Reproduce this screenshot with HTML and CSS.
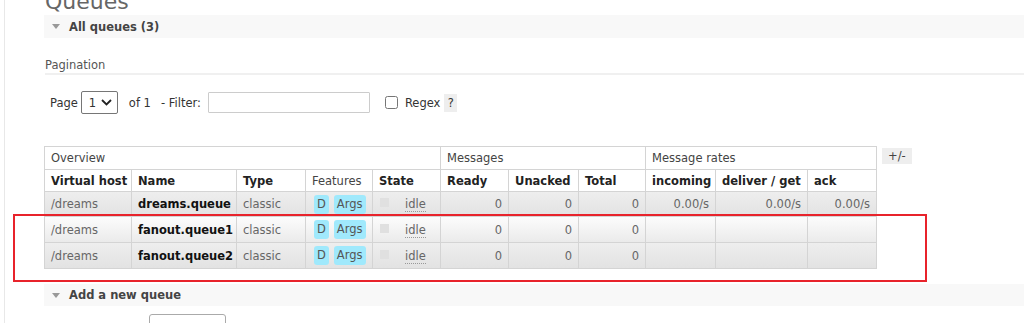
FILE: index.html
```html
<!DOCTYPE html>
<html lang="en">

<head>
    <meta charset="UTF-8">
    <title>Queues</title>
    <link rel="stylesheet" href="styles.css">
</head>

<body>
    <div class="wrap">
        <div class="main">
            <h1>Queues</h1>
            <div class="section-head"><span class="arrow"></span>All queues (3)</div>

            <h3 class="sub">Pagination</h3>
            <div class="pager">
                <span>Page</span>
                <div class="select">
                    <span>1</span>
                    <svg width="11" height="7" viewBox="0 0 11 7"><path d="M1 1 L5.5 5.5 L10 1" fill="none" stroke="#222" stroke-width="1.8"/></svg>
                </div>
                <span class="of">of 1</span>
                <span class="filter-label">- Filter:</span>
                <input type="text" class="filter">
                <input type="checkbox" class="regex-box">
                <span class="regex">Regex</span>
                <span class="help">?</span>
            </div>

            <div class="table-row">
                <table class="list">
                    <colgroup>
                        <col style="width: 87px">
                        <col style="width: 105px">
                        <col style="width: 69px">
                        <col style="width: 67px">
                        <col style="width: 68px">
                        <col style="width: 68px">
                        <col style="width: 70px">
                        <col style="width: 67px">
                        <col style="width: 70px">
                        <col style="width: 92px">
                        <col style="width: 69px">
                    </colgroup>
                    <thead>
                        <tr class="group">
                            <th colspan="5">Overview</th>
                            <th colspan="3">Messages</th>
                            <th colspan="3">Message rates</th>
                        </tr>
                        <tr class="cols">
                            <th>Virtual host</th>
                            <th>Name</th>
                            <th>Type</th>
                            <th class="plain">Features</th>
                            <th>State</th>
                            <th>Ready</th>
                            <th>Unacked</th>
                            <th>Total</th>
                            <th>incoming</th>
                            <th>deliver / get</th>
                            <th>ack</th>
                        </tr>
                    </thead>
                    <tbody>
                        <tr class="alt1">
                            <td>/dreams</td>
                            <td class="name">dreams.queue</td>
                            <td>classic</td>
                            <td><span class="badge first">D</span><span class="badge">Args</span></td>
                            <td><span class="state-box"></span><span class="idle">idle</span></td>
                            <td class="num">0</td>
                            <td class="num">0</td>
                            <td class="num">0</td>
                            <td class="num">0.00/s</td>
                            <td class="num">0.00/s</td>
                            <td class="num">0.00/s</td>
                        </tr>
                        <tr class="alt2">
                            <td>/dreams</td>
                            <td class="name">fanout.queue1</td>
                            <td>classic</td>
                            <td><span class="badge first">D</span><span class="badge">Args</span></td>
                            <td><span class="state-box"></span><span class="idle">idle</span></td>
                            <td class="num">0</td>
                            <td class="num">0</td>
                            <td class="num">0</td>
                            <td></td>
                            <td></td>
                            <td></td>
                        </tr>
                        <tr class="alt1">
                            <td>/dreams</td>
                            <td class="name">fanout.queue2</td>
                            <td>classic</td>
                            <td><span class="badge first">D</span><span class="badge">Args</span></td>
                            <td><span class="state-box"></span><span class="idle">idle</span></td>
                            <td class="num">0</td>
                            <td class="num">0</td>
                            <td class="num">0</td>
                            <td></td>
                            <td></td>
                            <td></td>
                        </tr>
                    </tbody>
                </table>
                <span class="toggle">+/-</span>
            </div>

            <div class="section-head add"><span class="arrow"></span>Add a new queue</div>
            <div class="add-body">
                <div class="type-select"></div>
            </div>
        </div>

        <!-- red box drawn over the two fanout rows -->
        <div class="highlight"></div>
    </div>
</body>

</html>
```

FILE: styles.css
```css
* {
    box-sizing: border-box;
}

body {
    margin: 0;
    font-family: "DejaVu Sans", Verdana, sans-serif;
    font-size: 11.5px;
    color: #444;
    background-color: #fff;
    overflow: hidden;
}

.wrap {
    position: relative;
    margin-left: 4px;
    height: 323px;
    border-left: 1px solid #e8e8e8;
}

.main {
    display: flow-root;
    padding-left: 39px;
}

h1 {
    margin: -10px 0 0 1px;
    font-size: 22px;
    line-height: 24px;
    font-weight: normal;
    color: #666;
}

.section-head {
    display: flex;
    align-items: center;
    height: 23px;
    margin-top: 1px;
    padding-left: 8px;
    background-color: #f8f8f8;
    font-weight: bold;
    color: #444;
}

.arrow {
    width: 0;
    height: 0;
    margin-right: 9px;
    border-left: 4px solid transparent;
    border-right: 4px solid transparent;
    border-top: 5px solid #999;
}

.sub {
    margin: 19px 0 0 1px;
    font-size: 11.5px;
    line-height: 16px;
    font-weight: normal;
    color: #555;
    border-bottom: 2px solid #f0f0f0;
}

.pager {
    display: flex;
    align-items: center;
    height: 23px;
    margin-top: 16px;
    padding-left: 6px;
    color: #333;
}

.select {
    display: flex;
    align-items: center;
    justify-content: space-between;
    width: 37px;
    height: 23px;
    margin-left: 3px;
    padding: 0 5px 0 7px;
    border: 1px solid #767676;
    border-radius: 2px;
}

.of {
    margin-left: 11px;
}

.filter-label {
    margin-left: 10px;
}

.filter {
    width: 162px;
    height: 21px;
    margin: 0 0 0 7px;
    border: 1px solid #ccc;
    border-radius: 1px;
}

.regex-box {
    width: 13px;
    height: 13px;
    margin: 0 0 0 15px;
}

.regex {
    margin-left: 7px;
}

.help {
    width: 13px;
    height: 18px;
    margin-left: 4px;
    line-height: 18px;
    text-align: center;
    background-color: #eee;
}

.table-row {
    display: flex;
    align-items: flex-start;
    margin-top: 32px;
}

table.list {
    width: 833px;
    table-layout: fixed;
    border-collapse: collapse;
    border: 1px solid #d4d4d4;
}

table.list th,
table.list td {
    padding: 0 6px;
    border: 1px solid #d4d4d4;
    white-space: nowrap;
    overflow: hidden;
    text-align: left;
}

table.list tr.group th {
    height: 23px;
    font-weight: normal;
    color: #444;
}

table.list tr.cols th {
    height: 22px;
    font-weight: bold;
    color: #222;
}

table.list tr.cols th.plain {
    font-weight: normal;
    color: #444;
}

table.list td {
    height: 25px;
    color: #666;
}

table.list tr.alt2 td,
table.list tbody tr:last-child td {
    height: 26px;
}

table.list tr.alt1 {
    background: linear-gradient(to bottom, #eeeeee, #e2e2e2);
}

table.list tr.alt2 {
    background: linear-gradient(to bottom, #fcfcfc, #eaeaea);
}

table.list td.name {
    font-weight: bold;
    color: #111;
}

table.list td.num {
    text-align: right;
}

.badge {
    display: inline-block;
    margin-left: 5px;
    padding: 0 3px;
    line-height: 19px;
    border-radius: 3px;
    background-color: #a0e9fc;
    color: #555;
}

.badge.first {
    margin-left: 2px;
}

.state-box {
    display: inline-block;
    width: 9px;
    height: 9px;
    margin: 0 16px 0 1px;
    background-color: #e0e0e0;
    vertical-align: 1px;
}

.idle {
    border-bottom: 1px dotted #999;
}

.toggle {
    margin: 2px 0 0 5px;
    padding: 0 6px;
    line-height: 16px;
    background-color: #eee;
    color: #444;
}

.section-head.add {
    height: 22px;
    margin-top: 15px;
}

.add-body {
    padding: 8px 0 0 105px;
}

.type-select {
    width: 77px;
    height: 20px;
    border: 1px solid #aaa;
    border-radius: 3px;
}

.highlight {
    position: absolute;
    left: 8px;
    top: 214px;
    width: 914px;
    height: 68px;
    border: 2px solid #e8232b;
}
```
